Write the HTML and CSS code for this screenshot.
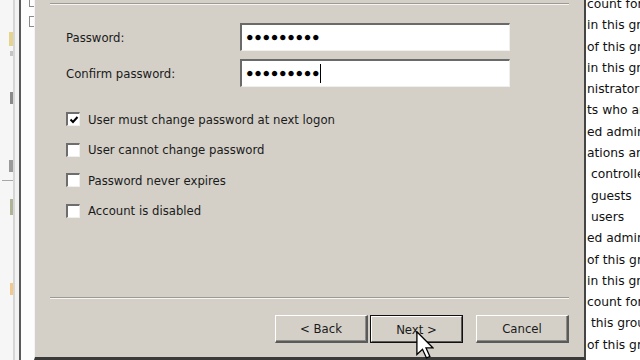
FILE: index.html
```html
<!DOCTYPE html>
<html>
<head>
<meta charset="utf-8">
<link rel="stylesheet" href="styles.css">
</head>
<body>
<div class="desktop">
  <div class="tree">
    <div class="tree-icons">
      <span class="ic folder"></span>
      <span class="ic grey1"></span>
      <span class="ic dark1"></span>
      <span class="ic dark2"></span>
      <span class="ic hline"></span>
      <span class="ic green"></span>
      <span class="ic orange"></span>
    </div>
    <div class="tree-line"></div>
    <div class="tree-pad"></div>
    <div class="tree-dark"></div>
    <div class="tree-white">
      <span class="frag frag1"></span>
      <span class="frag frag2"></span>
    </div>
  </div>

  <div class="dialog">
    <div class="sep sep-top"></div>
    <div class="fields">
      <div class="field-row">
        <span class="label">Password:</span>
        <div class="input"><span class="dots">●●●●●●●●●</span></div>
      </div>
      <div class="field-row">
        <span class="label">Confirm password:</span>
        <div class="input"><span class="dots">●●●●●●●●●</span><span class="caret"></span></div>
      </div>
    </div>
    <div class="checks">
      <div class="check-row">
        <span class="box"><svg viewBox="0 0 10 10" width="10" height="10"><path d="M1.5 4.5 L4 7 L8.5 2" fill="none" stroke="#000" stroke-width="2"/></svg></span>
        <span class="check-label">User must change password at next logon</span>
      </div>
      <div class="check-row">
        <span class="box"></span>
        <span class="check-label">User cannot change password</span>
      </div>
      <div class="check-row">
        <span class="box"></span>
        <span class="check-label">Password never expires</span>
      </div>
      <div class="check-row">
        <span class="box"></span>
        <span class="check-label">Account is disabled</span>
      </div>
    </div>
    <div class="spacer"></div>
    <div class="sep"></div>
    <div class="buttons">
      <div class="btn">&lt; Back</div>
      <div class="btn btn-default"><span class="btn-inner">Next &gt;</span></div>
      <div class="btn btn-cancel">Cancel</div>
    </div>
  </div>

  <div class="list">
    <div class="line">count for</div>
    <div class="line">in this gro</div>
    <div class="line">of this gro</div>
    <div class="line">in this gro</div>
    <div class="line">nistrators</div>
    <div class="line">ts who ar</div>
    <div class="line">ed adminis</div>
    <div class="line">ations an</div>
    <div class="line">&nbsp;controlle</div>
    <div class="line">&nbsp;guests</div>
    <div class="line">&nbsp;users</div>
    <div class="line">ed adminis</div>
    <div class="line">of this gr</div>
    <div class="line">in this gro</div>
    <div class="line">count for</div>
    <div class="line">&nbsp;this grou</div>
    <div class="line">of this gr</div>
  </div>
</div>

<svg class="cursor" width="18" height="28" viewBox="0 0 12 19">
  <path d="M0.5 0.5 L0.5 16 L4.3 12.4 L7 18.3 L9.3 17.3 L6.7 11.5 L11.5 11.5 Z" fill="#fff" stroke="#000" stroke-width="0.9" stroke-linejoin="miter"/>
</svg>
</body>
</html>
```

FILE: styles.css
```css
html, body {
  margin: 0;
  padding: 0;
}
body {
  width: 640px;
  height: 360px;
  overflow: hidden;
  position: relative;
  background: #3a3a3a;
  font-family: "DejaVu Sans Condensed", "DejaVu Sans", sans-serif;
  font-stretch: condensed;
}
.desktop {
  display: flex;
  height: 360px;
}

/* left tree strip */
.tree {
  display: flex;
  width: 34px;
  flex: none;
  height: 360px;
}
.tree-icons {
  width: 13px;
  background: #f6f6f6;
  display: flex;
  flex-direction: column;
  align-items: flex-end;
}
.ic {
  display: block;
  width: 3px;
}
.folder {
  margin-top: 32px;
  height: 14px;
  width: 4px;
  background: #e6d38e;
}
.grey1 {
  margin-top: 5px;
  height: 5px;
  background: #c4c4c4;
}
.dark1 {
  margin-top: 36px;
  height: 12px;
  background: #8a8a8a;
}
.dark2 {
  margin-top: 56px;
  height: 12px;
  width: 4px;
  background: #9a9a9a;
}
.hline {
  margin-top: 8px;
  width: 11px;
  height: 1px;
  background: #a8a8a8;
}
.green {
  margin-top: 18px;
  height: 16px;
  background: #b0b496;
}
.orange {
  margin-top: 68px;
  height: 12px;
  background: #f2c98a;
}
.tree-line {
  width: 2px;
  background: #d6d6d6;
}
.tree-pad {
  width: 4px;
  background: #f2f2f2;
}
.tree-dark {
  width: 2px;
  background: #5b5b5b;
}
.tree-white {
  width: 13px;
  background: #fdfdfd;
  display: flex;
  flex-direction: column;
  align-items: flex-end;
}
.frag {
  display: block;
  width: 4px;
  border: 1px solid #8a8a8a;
  border-right: none;
}
.frag1 {
  margin-top: -3px;
  height: 8px;
}
.frag2 {
  margin-top: 9px;
  height: 9px;
}

/* dialog */
.dialog {
  width: 552px;
  flex: none;
  height: 360px;
  box-sizing: border-box;
  background: #d4d0c8;
  border-left: 1px solid #f4f4f4;
  border-right: 2px solid #454545;
  border-bottom: 3px solid #3a3a3a;
  padding: 0 15px 14px 15px;
  display: flex;
  flex-direction: column;
  color: #1a1a1a;
  font-size: 13px;
}
.sep {
  border-top: 1px solid #9c9a95;
  border-bottom: 1px solid #f6f5f2;
  height: 0;
  flex: none;
}
.sep-top {
  margin-top: 3px;
}
.fields {
  margin-top: 18px;
  display: flex;
  flex-direction: column;
  gap: 8px;
  padding-left: 16px;
}
.field-row {
  display: flex;
  align-items: center;
  height: 28px;
}
.label {
  width: 174px;
  flex: none;
}
.input {
  width: 270px;
  height: 28px;
  box-sizing: border-box;
  background: #fff;
  border-top: 2px solid #6a6a6a;
  border-left: 2px solid #6a6a6a;
  border-bottom: 1px solid #f0efec;
  border-right: 1px solid #f0efec;
  display: flex;
  align-items: center;
  padding-left: 4px;
}
.dots {
  font-family: "Liberation Sans", sans-serif;
  font-size: 12.5px;
  letter-spacing: 0.7px;
  color: #000;
  line-height: 1;
}
.caret {
  width: 1px;
  height: 19px;
  background: #000;
}
.checks {
  margin-top: 17px;
  padding-left: 16px;
  display: flex;
  flex-direction: column;
}
.check-row {
  display: flex;
  align-items: center;
  height: 30.5px;
}
.box {
  width: 14px;
  height: 14px;
  box-sizing: border-box;
  background: #fff;
  border-top: 2px solid #6e6e6e;
  border-left: 2px solid #6e6e6e;
  border-right: 1px solid #f0efec;
  border-bottom: 1px solid #f0efec;
  display: flex;
  align-items: center;
  justify-content: center;
  flex: none;
}
.box svg {
  display: block;
}
.check-label {
  margin-left: 8px;
}
.spacer {
  flex: 1;
}
.buttons {
  margin-top: 16px;
  display: flex;
  justify-content: flex-end;
}
.btn {
  width: 93px;
  height: 28px;
  box-sizing: border-box;
  border-top: 1px solid #ffffff;
  border-left: 1px solid #ffffff;
  border-right: 2px solid #5a5a5a;
  border-bottom: 2px solid #5a5a5a;
  box-shadow: inset -1px -1px 0 #8e8c88;
  display: flex;
  align-items: center;
  justify-content: center;
  color: #1a1a1a;
}
.btn-default {
  margin-left: 2px;
  border: 1px solid #111;
  box-shadow: none;
  padding: 0;
}
.btn-inner {
  width: 100%;
  height: 100%;
  box-sizing: border-box;
  border-top: 1px solid #ffffff;
  border-left: 1px solid #ffffff;
  border-right: 1px solid #5a5a5a;
  border-bottom: 1px solid #5a5a5a;
  display: flex;
  align-items: center;
  justify-content: center;
}
.btn-cancel {
  margin-left: 13px;
}

/* right list */
.list {
  flex: 1;
  background: #ffffff;
  overflow: hidden;
  font-family: "DejaVu Sans", sans-serif;
  font-stretch: normal;
  font-size: 12.3px;
  color: #111;
  padding-left: 1px;
}
.line {
  height: 21.3px;
  line-height: 21.3px;
  white-space: nowrap;
}
.line:first-child {
  margin-top: -6px;
}

.cursor {
  position: absolute;
  left: 416px;
  top: 331px;
}
```
